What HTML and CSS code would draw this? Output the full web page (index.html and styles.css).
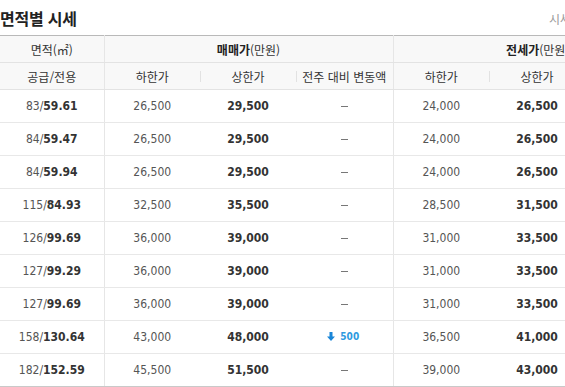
FILE: index.html
```html
<!DOCTYPE html>
<html lang="ko">
<head>
<meta charset="utf-8">
<link rel="stylesheet" href="styles.css">
</head>
<body>
<div class="wrap">
  <div class="titlebar">
    <h2 class="title">면적별 시세</h2>
    <span class="note">시세 기준일</span>
  </div>
  <table class="grid">
    <colgroup>
      <col class="c-area"><col class="c1"><col class="c1"><col class="c2"><col class="c1"><col class="c1"><col class="c2">
    </colgroup>
    <thead>
      <tr class="h1">
        <th>면적(㎡)</th>
        <th colspan="3" class="grp"><b>매매가</b>(만원)</th>
        <th colspan="3" class="grp"><b>전세가</b>(만원)</th>
      </tr>
      <tr class="h2">
        <th>공급/전용</th>
        <th class="first">하한가</th>
        <th class="sep">상한가</th>
        <th class="sep">전주 대비 변동액</th>
        <th class="first">하한가</th>
        <th class="sep">상한가</th>
        <th class="sep">전주 대비 변동액</th>
      </tr>
    </thead>
    <tbody>
      <tr><td class="area">83/<b>59.61</b></td><td>26,500</td><td class="hi">29,500</td><td><span class="dash"></span></td><td class="first">24,000</td><td class="hi">26,500</td><td><span class="dash"></span></td></tr>
      <tr><td class="area">84/<b>59.47</b></td><td>26,500</td><td class="hi">29,500</td><td><span class="dash"></span></td><td class="first">24,000</td><td class="hi">26,500</td><td><span class="dash"></span></td></tr>
      <tr><td class="area">84/<b>59.94</b></td><td>26,500</td><td class="hi">29,500</td><td><span class="dash"></span></td><td class="first">24,000</td><td class="hi">26,500</td><td><span class="dash"></span></td></tr>
      <tr><td class="area">115/<b>84.93</b></td><td>32,500</td><td class="hi">35,500</td><td><span class="dash"></span></td><td class="first">28,500</td><td class="hi">31,500</td><td><span class="dash"></span></td></tr>
      <tr><td class="area">126/<b>99.69</b></td><td>36,000</td><td class="hi">39,000</td><td><span class="dash"></span></td><td class="first">31,000</td><td class="hi">33,500</td><td><span class="dash"></span></td></tr>
      <tr><td class="area">127/<b>99.29</b></td><td>36,000</td><td class="hi">39,000</td><td><span class="dash"></span></td><td class="first">31,000</td><td class="hi">33,500</td><td><span class="dash"></span></td></tr>
      <tr><td class="area">127/<b>99.69</b></td><td>36,000</td><td class="hi">39,000</td><td><span class="dash"></span></td><td class="first">31,000</td><td class="hi">33,500</td><td><span class="dash"></span></td></tr>
      <tr><td class="area">158/<b>130.64</b></td><td>43,000</td><td class="hi">48,000</td><td><span class="down"><svg class="arrow" viewBox="0 0 8 9" width="8" height="9"><path d="M2.5 0h3v4.5H8L4 9 0 4.5h2.5z" fill="#1a86d8"/></svg>500</span></td><td class="first">36,500</td><td class="hi">41,000</td><td><span class="dash"></span></td></tr>
      <tr><td class="area">182/<b>152.59</b></td><td>45,500</td><td class="hi">51,500</td><td><span class="dash"></span></td><td class="first">39,000</td><td class="hi">43,000</td><td><span class="dash"></span></td></tr>
    </tbody>
  </table>
</div>
</body>
</html>
```

FILE: styles.css
```css
html, body {
  margin: 0;
  padding: 0;
  background: #fff;
}

.wrap {
  width: 565px;
  height: 387px;
  overflow: hidden;
}

.titlebar {
  width: 700px;
  height: 35px;
  display: flex;
  align-items: center;
}

.title {
  flex: 0 0 549px;
  margin: 0;
  font-family: "Noto Sans CJK KR", sans-serif;
  font-size: 16px;
  font-weight: 700;
  color: #222;
  letter-spacing: -0.2px;
  line-height: 1;
}

.note {
  font-family: "Noto Sans CJK KR", sans-serif;
  font-size: 12px;
  color: #999;
  white-space: nowrap;
  padding-top: 2px;
}

.grid {
  width: 682px;
  border-collapse: collapse;
  table-layout: fixed;
  border-top: 1px solid #b9b9b9;
}

.c-area { width: 104px; }
.c1 { width: 96px; }
.c2 { width: 97px; }

.grid th {
  background: #f8f8f8;
  font-family: "Noto Sans CJK KR", sans-serif;
  font-size: 12px;
  font-weight: 400;
  color: #333;
  padding: 0;
  text-align: center;
  border-bottom: 1px solid #e3e3e3;
  position: relative;
}

.h1 th { height: 26px; }
.h2 th { height: 26px; }

.grid th b {
  font-weight: 700;
  color: #222;
}

.grid th.grp,
.grid th.first,
.grid td.first {
  border-left: 1px solid #e6e6e6;
}

.grid tr > :first-child {
  border-right: 1px solid #e6e6e6;
}

.grid th.sep::before {
  content: "";
  position: absolute;
  left: 0;
  top: 8px;
  width: 1px;
  height: 11px;
  background: #e2e2e2;
}

.grid td {
  height: 32px;
  padding: 0;
  text-align: center;
  font-family: "DejaVu Sans Condensed", "Liberation Sans", sans-serif;
  font-size: 12px;
  color: #555;
  border-bottom: 1px solid #e8e8e8;
}

.grid tbody tr:last-child td {
  border-bottom-color: #c9c9c9;
}

.grid td b,
.grid td.hi {
  font-weight: 700;
  color: #333;
}

.dash {
  display: inline-block;
  width: 7px;
  height: 1px;
  background: #777;
  vertical-align: middle;
}

.down {
  display: inline-flex;
  align-items: center;
  gap: 5px;
  font-size: 10px;
  font-weight: 700;
  color: #2e9ae0;
  padding-right: 2px;
}

.arrow {
  display: block;
  margin-top: 1px;
}
```
